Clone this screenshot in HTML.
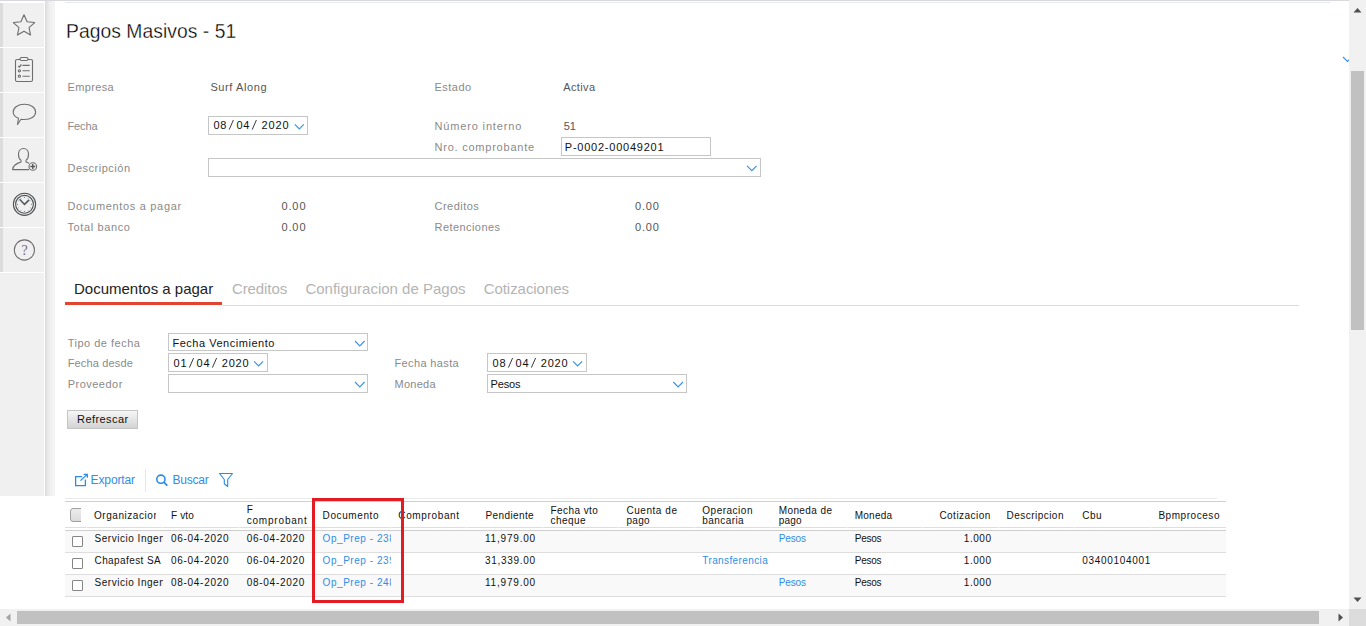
<!DOCTYPE html>
<html><head><meta charset="utf-8"><title>Pagos Masivos - 51</title>
<style>
html,body{margin:0;padding:0;width:1366px;height:626px;overflow:hidden;background:#fff;}
body{position:relative;font-family:"Liberation Sans",sans-serif;}
.a{position:absolute;}
.t{position:absolute;white-space:nowrap;font-family:"Liberation Sans",sans-serif;}
.box{position:absolute;box-sizing:border-box;border:1px solid #c6c6c6;background:#fff;}
.sep{position:absolute;left:0;width:44px;height:1px;background:#fff;}
.chev{position:absolute;width:11px;height:6px;}
.cb{position:absolute;box-sizing:border-box;width:11px;height:11px;border:1px solid #858585;border-radius:1px;background:#fff;}
</style></head>
<body>
<!-- top line -->
<div class="a" style="left:0;top:0;width:1366px;height:1px;background:#d8d9dd"></div>
<div class="a" style="left:65px;top:2px;width:1265px;height:1px;background:#e7e8e9"></div>

<!-- sidebar -->
<div class="a" style="left:0;top:1px;width:44px;height:495px;background:#f0f0f0"></div>
<div class="a" style="left:0;top:1px;width:44px;height:2px;background:#fff"></div>
<div class="a" style="left:0;top:3px;width:3px;height:269px;background:#dcdcdc"></div>
<div class="sep" style="top:47px"></div>
<div class="sep" style="top:92px"></div>
<div class="sep" style="top:137px"></div>
<div class="sep" style="top:182px"></div>
<div class="sep" style="top:227px"></div>
<div class="sep" style="top:272px"></div>
<div class="a" style="left:44px;top:1px;width:1px;height:494px;background:#fff"></div>
<div class="a" style="left:45px;top:1px;width:10px;height:495px;background:linear-gradient(to right,#d9d9d9 0%,#e6e6e6 20%,#eeeeee 45%,#f3f3f3 75%,#f4f4f4 100%)"></div>

<!-- sidebar icons -->
<svg class="a" style="left:0;top:0" width="45" height="280" viewBox="0 0 45 280" fill="none" stroke="#6e6e6e" stroke-width="1.1">
  <!-- star -->
  <path d="M24.00 14.80 L27.12 21.71 L34.65 22.54 L29.04 27.64 L30.58 35.06 L24.00 31.30 L17.42 35.06 L18.96 27.64 L13.35 22.54 L20.88 21.71 Z" stroke-linejoin="round"/>
  <!-- clipboard -->
  <rect x="15.5" y="59.5" width="17" height="22" rx="1.5"/>
  <rect x="20" y="57.5" width="8" height="3" rx="1.5" fill="#f0f0f0"/>
  <path d="M18.3 66 l1.1 1.1 l2-2.6" stroke-width="1.3"/>
  <path d="M22.5 65.4 h7.2 M22.5 70.8 h7.2 M22.5 76.2 h7.2"/>
  <circle cx="19.4" cy="70.8" r="1.1"/>
  <circle cx="19.4" cy="76.2" r="1.1"/>
  <!-- speech bubble -->
  <path d="M24.4 104.3 C30.8 104.3 35.6 107.5 35.6 112 C35.6 116.5 30.8 119.5 24.4 119.5 C23 119.5 22 119.4 21 119.2 L17.5 124.5 L18.5 118.3 C15 117 13.2 114.8 13.2 112 C13.2 107.5 18 104.3 24.4 104.3 Z" stroke-linejoin="round"/>
  <!-- user plus -->
  <path d="M23.5 148.5 C20.5 148.5 18.5 151 18.5 154.5 C18.5 157.5 19.8 159.5 21 160.3 L21 162 C16.5 163.5 13 165 12.6 169.6 L29 169.6 M26 160.3 C27.2 159.5 28.5 157.5 28.5 154.5 C28.5 151 26.5 148.5 23.5 148.5 M26 160.3 L26 162 C27 162.3 28 162.7 29 163.2" stroke-linejoin="round"/>
  <circle cx="32.8" cy="166.5" r="3.8" fill="#f0f0f0"/>
  <path d="M32.8 164.1 v4.8 M30.4 166.5 h4.8" stroke-width="1.4" stroke="#555"/>
  <!-- clock -->
  <g stroke="#4f5458">
  <circle cx="24.5" cy="204.3" r="11.1"/>
  <circle cx="24.5" cy="204.3" r="8.9"/>
  <path d="M19.6 199.3 L24.5 204.4 L29.1 199.9" stroke-width="1.5" stroke-linejoin="miter"/>
  </g>
  <g fill="#6a6e72" stroke="none"><circle cx="24.50" cy="197.30" r="0.55"/><circle cx="28.00" cy="198.24" r="0.42"/><circle cx="30.56" cy="200.80" r="0.42"/><circle cx="31.50" cy="204.30" r="0.55"/><circle cx="30.56" cy="207.80" r="0.42"/><circle cx="28.00" cy="210.36" r="0.42"/><circle cx="24.50" cy="211.30" r="0.55"/><circle cx="21.00" cy="210.36" r="0.42"/><circle cx="18.44" cy="207.80" r="0.42"/><circle cx="17.50" cy="204.30" r="0.55"/><circle cx="18.44" cy="200.80" r="0.42"/><circle cx="21.00" cy="198.24" r="0.42"/></g>
  <!-- help -->
  <circle cx="24.4" cy="250" r="10.1"/>
  <text x="24.5" y="255" font-family="Liberation Serif" font-size="14" fill="#6e6e6e" stroke="none" text-anchor="middle">?</text>
</svg>

<!-- form boxes -->
<div class="box" style="left:208px;top:116px;width:100px;height:19px"></div>
<div class="box" style="left:561px;top:137px;width:150px;height:19px"></div>
<div class="box" style="left:208px;top:158px;width:553px;height:19px"></div>

<!-- tabs -->
<div class="a" style="left:65px;top:302px;width:157px;height:3px;background:#e2452f"></div>
<div class="a" style="left:222px;top:305px;width:1077px;height:1px;background:#dcdcdc"></div>

<!-- filter boxes -->
<div class="box" style="left:168px;top:333px;width:200px;height:18px"></div>
<div class="box" style="left:168px;top:353px;width:100px;height:19px"></div>
<div class="box" style="left:168px;top:374px;width:200px;height:19px"></div>
<div class="box" style="left:487px;top:353px;width:100px;height:19px"></div>
<div class="box" style="left:487px;top:374px;width:200px;height:19px"></div>
<div class="a" style="left:67px;top:410px;width:71px;height:19px;box-sizing:border-box;border:1px solid #c4c4c4;background:linear-gradient(#f7f7f7,#d3d3d3)"></div>

<svg class="a" style="left:0;top:0" width="1366" height="626" viewBox="0 0 1366 626" fill="none" stroke="#222" stroke-width="0.9"><path d="M229.2 129.6 L233.4 120.0"/><path d="M252.2 129.6 L256.4 120.0"/><path d="M189.4 367.6 L193.6 358.0"/><path d="M212.4 367.6 L216.6 358.0"/><path d="M508.4 367.6 L512.6 358.0"/><path d="M531.4 367.6 L535.6 358.0"/></svg>
<!-- chevrons -->
<svg class="a" style="left:0;top:0" width="1366" height="626" viewBox="0 0 1366 626" fill="none" stroke="#3f92ea" stroke-width="1.2">
  <path d="M294.8 124.3 L299.3 128.8 L303.8 124.3"/>
  <path d="M747 165.8 L751.8 170.6 L756.6 165.8"/>
  <path d="M355 341 L359.8 345.8 L364.6 341"/>
  <path d="M254.1 361.3 L258.6 365.8 L263.1 361.3"/>
  <path d="M355 382 L359.8 386.8 L364.6 382"/>
  <path d="M573.1 361.3 L577.6 365.8 L582.1 361.3"/>
  <path d="M673.3 382.0 L678.1 386.8 L682.9 382.0"/>
  <path d="M1343 57 L1347.5 61.5 L1352 57"/>
</svg>

<!-- toolbar icons -->
<svg class="a" style="left:0;top:0" width="300" height="500" viewBox="0 0 300 500" fill="none" stroke="#2a8ce8" stroke-width="1.3">
  <path d="M82.2 476.6 H75.6 V485.6 H85.4 V479.4"/>
  <path d="M80.5 480.6 L87.1 474.4 M83.6 474.3 H87.3 V477.8"/>
  <circle cx="160.9" cy="479.2" r="4.1" stroke-width="1.6"/>
  <path d="M163.8 482.2 L167.3 485.7" stroke-width="1.8"/>
  <path d="M219.5 473.5 H232.5 L227.7 479.5 V486.5 L224.3 483.8 V479.5 Z" stroke-width="1.1" stroke-linejoin="round"/>
</svg>
<div class="a" style="left:145px;top:469px;width:1px;height:23px;background:#e6e6e6"></div>

<!-- table -->
<div class="a" style="left:65px;top:498px;width:1152px;height:1px;background:#ebebeb"></div>
<div class="a" style="left:65px;top:501px;width:1161px;height:1px;background:#cfcfcf"></div>
<div class="a" style="left:65px;top:527px;width:1161px;height:1px;background:#dedede"></div>
<div class="a" style="left:65px;top:530px;width:1161px;height:1px;background:#cfcfcf"></div>
<div class="a" style="left:65px;top:531px;width:1161px;height:21px;background:#f9f9f9"></div>
<div class="a" style="left:65px;top:552px;width:1161px;height:1px;background:#dedede"></div>
<div class="a" style="left:65px;top:574px;width:1161px;height:1px;background:#dedede"></div>
<div class="a" style="left:65px;top:575px;width:1161px;height:21px;background:#f9f9f9"></div>
<div class="a" style="left:65px;top:596px;width:1161px;height:1px;background:#dedede"></div>

<div class="a" style="left:86px;top:527px;width:1px;height:1px;background:#f4f4f4"></div><div class="a" style="left:162px;top:527px;width:1px;height:1px;background:#f4f4f4"></div><div class="a" style="left:238px;top:527px;width:1px;height:1px;background:#f4f4f4"></div><div class="a" style="left:314px;top:527px;width:1px;height:1px;background:#f4f4f4"></div><div class="a" style="left:390px;top:527px;width:1px;height:1px;background:#f4f4f4"></div><div class="a" style="left:466px;top:527px;width:1px;height:1px;background:#f4f4f4"></div><div class="a" style="left:542px;top:527px;width:1px;height:1px;background:#f4f4f4"></div><div class="a" style="left:618px;top:527px;width:1px;height:1px;background:#f4f4f4"></div><div class="a" style="left:694px;top:527px;width:1px;height:1px;background:#f4f4f4"></div><div class="a" style="left:770px;top:527px;width:1px;height:1px;background:#f4f4f4"></div><div class="a" style="left:846px;top:527px;width:1px;height:1px;background:#f4f4f4"></div><div class="a" style="left:922px;top:527px;width:1px;height:1px;background:#f4f4f4"></div><div class="a" style="left:998px;top:527px;width:1px;height:1px;background:#f4f4f4"></div><div class="a" style="left:1074px;top:527px;width:1px;height:1px;background:#f4f4f4"></div><div class="a" style="left:1150px;top:527px;width:1px;height:1px;background:#f4f4f4"></div>
<!-- header checkbox (clipped) -->
<div class="a" style="left:70px;top:508px;width:11px;height:14px;overflow:hidden">
  <div style="position:absolute;left:0;top:0;width:14px;height:14px;box-sizing:border-box;border:1px solid #a0a0a0;border-radius:3px;background:linear-gradient(#ececec,#dcdcdc)"></div>
</div>
<div class="cb" style="left:72px;top:536px"></div>
<div class="cb" style="left:72px;top:558px"></div>
<div class="cb" style="left:72px;top:580px"></div>

<div class="t" style="left:66.00px;top:21.00px;font-size:19.3px;line-height:21px;color:#000000;letter-spacing:0.053px;-webkit-text-stroke:0.3px #fff">Pagos Masivos - 51</div>
<div class="t" style="left:67.50px;top:81.00px;font-size:11px;line-height:12px;color:#8a8a8a;letter-spacing:0.350px;">Empresa</div>
<div class="t" style="left:210.40px;top:81.00px;font-size:11px;line-height:12px;color:#555555;letter-spacing:0.595px;">Surf Along</div>
<div class="t" style="left:434.50px;top:81.00px;font-size:11px;line-height:12px;color:#8a8a8a;letter-spacing:0.474px;">Estado</div>
<div class="t" style="left:563.20px;top:81.00px;font-size:11px;line-height:12px;color:#555555;letter-spacing:0.393px;">Activa</div>
<div class="t" style="left:67.50px;top:120.00px;font-size:11px;line-height:12px;color:#8a8a8a;letter-spacing:-0.114px;">Fecha</div>
<div class="t" style="left:213.40px;top:119.00px;font-size:11px;line-height:12px;color:#111111;letter-spacing:0.782px;">08</div>
<div class="t" style="left:236.40px;top:119.00px;font-size:11px;line-height:12px;color:#111111;letter-spacing:0.682px;">04</div>
<div class="t" style="left:261.50px;top:119.00px;font-size:11px;line-height:12px;color:#111111;letter-spacing:0.849px;">2020</div>
<div class="t" style="left:434.50px;top:120.00px;font-size:11px;line-height:12px;color:#8a8a8a;letter-spacing:0.847px;">Número interno</div>
<div class="t" style="left:563.70px;top:120.00px;font-size:11px;line-height:12px;color:#555555;letter-spacing:-0.118px;">51</div>
<div class="t" style="left:434.50px;top:141.00px;font-size:11px;line-height:12px;color:#8a8a8a;letter-spacing:0.772px;">Nro. comprobante</div>
<div class="t" style="left:564.80px;top:141.00px;font-size:11px;line-height:12px;color:#111111;letter-spacing:0.767px;">P-0002-00049201</div>
<div class="t" style="left:67.50px;top:162.00px;font-size:11px;line-height:12px;color:#8a8a8a;letter-spacing:0.505px;">Descripción</div>
<div class="t" style="left:67.50px;top:200.00px;font-size:11px;line-height:12px;color:#8a8a8a;letter-spacing:0.679px;">Documentos a pagar</div>
<div class="t" style="left:281.40px;top:200.00px;font-size:11px;line-height:12px;color:#555555;letter-spacing:0.903px;">0.00</div>
<div class="t" style="left:67.50px;top:221.00px;font-size:11px;line-height:12px;color:#8a8a8a;letter-spacing:0.616px;">Total banco</div>
<div class="t" style="left:281.40px;top:221.00px;font-size:11px;line-height:12px;color:#555555;letter-spacing:0.903px;">0.00</div>
<div class="t" style="left:434.50px;top:200.00px;font-size:11px;line-height:12px;color:#8a8a8a;letter-spacing:0.477px;">Creditos</div>
<div class="t" style="left:635.00px;top:200.00px;font-size:11px;line-height:12px;color:#555555;letter-spacing:0.803px;">0.00</div>
<div class="t" style="left:434.50px;top:221.00px;font-size:11px;line-height:12px;color:#8a8a8a;letter-spacing:0.435px;">Retenciones</div>
<div class="t" style="left:635.00px;top:221.00px;font-size:11px;line-height:12px;color:#555555;letter-spacing:0.803px;">0.00</div>
<div class="t" style="left:74.00px;top:280.00px;font-size:15px;line-height:17px;color:#222222;letter-spacing:-0.003px;">Documentos a pagar</div>
<div class="t" style="left:231.90px;top:280.00px;font-size:15px;line-height:17px;color:#b4b4b4;letter-spacing:-0.079px;">Creditos</div>
<div class="t" style="left:305.40px;top:280.00px;font-size:15px;line-height:17px;color:#b4b4b4;letter-spacing:-0.000px;">Configuracion de Pagos</div>
<div class="t" style="left:483.70px;top:280.00px;font-size:15px;line-height:17px;color:#b4b4b4;letter-spacing:-0.052px;">Cotizaciones</div>
<div class="t" style="left:67.70px;top:337.00px;font-size:11px;line-height:12px;color:#8a8a8a;letter-spacing:0.498px;">Tipo de fecha</div>
<div class="t" style="left:172.40px;top:337.00px;font-size:11px;line-height:12px;color:#111111;letter-spacing:0.529px;">Fecha Vencimiento</div>
<div class="t" style="left:67.70px;top:357.00px;font-size:11px;line-height:12px;color:#8a8a8a;letter-spacing:0.152px;">Fecha desde</div>
<div class="t" style="left:173.60px;top:357.00px;font-size:11px;line-height:12px;color:#111111;letter-spacing:0.782px;">01</div>
<div class="t" style="left:196.60px;top:357.00px;font-size:11px;line-height:12px;color:#111111;letter-spacing:0.682px;">04</div>
<div class="t" style="left:221.70px;top:357.00px;font-size:11px;line-height:12px;color:#111111;letter-spacing:0.849px;">2020</div>
<div class="t" style="left:67.70px;top:378.00px;font-size:11px;line-height:12px;color:#8a8a8a;letter-spacing:0.489px;">Proveedor</div>
<div class="t" style="left:394.50px;top:357.00px;font-size:11px;line-height:12px;color:#8a8a8a;letter-spacing:0.368px;">Fecha hasta</div>
<div class="t" style="left:492.60px;top:357.00px;font-size:11px;line-height:12px;color:#111111;letter-spacing:0.782px;">08</div>
<div class="t" style="left:515.60px;top:357.00px;font-size:11px;line-height:12px;color:#111111;letter-spacing:0.682px;">04</div>
<div class="t" style="left:540.70px;top:357.00px;font-size:11px;line-height:12px;color:#111111;letter-spacing:0.849px;">2020</div>
<div class="t" style="left:394.50px;top:378.00px;font-size:11px;line-height:12px;color:#8a8a8a;letter-spacing:0.273px;">Moneda</div>
<div class="t" style="left:490.50px;top:378.00px;font-size:11px;line-height:12px;color:#111111;letter-spacing:-0.143px;">Pesos</div>
<div class="t" style="left:77.00px;top:413.00px;font-size:11px;line-height:12px;color:#111111;letter-spacing:0.435px;">Refrescar</div>
<div class="t" style="left:90.60px;top:473.00px;font-size:12px;line-height:14px;color:#2f8ee8;letter-spacing:-0.122px;">Exportar</div>
<div class="t" style="left:172.40px;top:473.00px;font-size:12px;line-height:14px;color:#2f8ee8;letter-spacing:-0.190px;">Buscar</div>
<div class="a" style="left:86px;top:508.00px;width:70px;height:15px;overflow:hidden"><div class="t" style="left:8.00px;top:2px;font-size:10px;line-height:11px;color:#111111;letter-spacing:0.550px;">Organizacion</div></div>
<div class="t" style="left:170.90px;top:510.00px;font-size:10px;line-height:11px;color:#111111;letter-spacing:0.184px;">F vto</div>
<div class="t" style="left:246.70px;top:504.00px;font-size:10px;line-height:11px;color:#111111;letter-spacing:0.550px;">F</div>
<div class="a" style="left:238px;top:513.00px;width:69px;height:15px;overflow:hidden"><div class="t" style="left:8.70px;top:2px;font-size:10px;line-height:11px;color:#111111;letter-spacing:0.808px;">comprobante</div></div>
<div class="t" style="left:322.60px;top:510.00px;font-size:10px;line-height:11px;color:#111111;letter-spacing:0.603px;">Documento</div>
<div class="a" style="left:390px;top:508.00px;width:70px;height:15px;overflow:hidden"><div class="t" style="left:8.30px;top:2px;font-size:10px;line-height:11px;color:#111111;letter-spacing:0.639px;">Comprobante</div></div>
<div class="t" style="left:485.50px;top:510.00px;font-size:10px;line-height:11px;color:#111111;letter-spacing:0.390px;">Pendiente</div>
<div class="t" style="left:550.50px;top:505.00px;font-size:10px;line-height:11px;color:#111111;letter-spacing:0.431px;">Fecha vto</div>
<div class="t" style="left:550.50px;top:515.00px;font-size:10px;line-height:11px;color:#111111;letter-spacing:0.451px;">cheque</div>
<div class="t" style="left:626.40px;top:505.00px;font-size:10px;line-height:11px;color:#111111;letter-spacing:0.552px;">Cuenta de</div>
<div class="t" style="left:626.40px;top:515.00px;font-size:10px;line-height:11px;color:#111111;letter-spacing:0.338px;">pago</div>
<div class="t" style="left:702.30px;top:505.00px;font-size:10px;line-height:11px;color:#111111;letter-spacing:0.503px;">Operacion</div>
<div class="t" style="left:702.30px;top:515.00px;font-size:10px;line-height:11px;color:#111111;letter-spacing:0.429px;">bancaria</div>
<div class="t" style="left:778.70px;top:505.00px;font-size:10px;line-height:11px;color:#111111;letter-spacing:0.403px;">Moneda de</div>
<div class="t" style="left:778.70px;top:515.00px;font-size:10px;line-height:11px;color:#111111;letter-spacing:0.205px;">pago</div>
<div class="t" style="left:854.70px;top:510.00px;font-size:10px;line-height:11px;color:#111111;letter-spacing:0.245px;">Moneda</div>
<div class="t" style="left:939.40px;top:510.00px;font-size:10px;line-height:11px;color:#111111;letter-spacing:0.475px;">Cotizacion</div>
<div class="t" style="left:1006.60px;top:510.00px;font-size:10px;line-height:11px;color:#111111;letter-spacing:0.462px;">Descripcion</div>
<div class="t" style="left:1082.30px;top:510.00px;font-size:10px;line-height:11px;color:#111111;letter-spacing:0.458px;">Cbu</div>
<div class="a" style="left:1150px;top:508.00px;width:70px;height:15px;overflow:hidden"><div class="t" style="left:8.40px;top:2px;font-size:10px;line-height:11px;color:#111111;letter-spacing:0.550px;">Bpmproceso</div></div>
<div class="a" style="left:86px;top:531.00px;width:77px;height:15px;overflow:hidden"><div class="t" style="left:8.50px;top:2px;font-size:10px;line-height:11px;color:#111111;letter-spacing:0.530px;">Servicio Ingenieria</div></div>
<div class="t" style="left:170.90px;top:533.00px;font-size:10px;line-height:11px;color:#111111;letter-spacing:0.723px;">06-04-2020</div>
<div class="t" style="left:246.70px;top:533.00px;font-size:10px;line-height:11px;color:#111111;letter-spacing:0.723px;">06-04-2020</div>
<div class="a" style="left:314px;top:531.00px;width:77px;height:15px;overflow:hidden"><div class="t" style="left:8.60px;top:2px;font-size:10px;line-height:11px;color:#2f8ee8;letter-spacing:0.550px;">Op_Prep - 2385</div></div>
<div class="t" style="left:485.00px;top:533.00px;font-size:10px;line-height:11px;color:#111111;letter-spacing:0.802px;">11,979.00</div>
<div class="t" style="left:778.70px;top:533.00px;font-size:10px;line-height:11px;color:#2f8ee8;letter-spacing:-0.123px;">Pesos</div>
<div class="t" style="left:854.70px;top:533.00px;font-size:10px;line-height:11px;color:#111111;letter-spacing:-0.223px;">Pesos</div>
<div class="t" style="left:963.80px;top:533.00px;font-size:10px;line-height:11px;color:#111111;letter-spacing:0.534px;">1.000</div>
<div class="t" style="left:94.50px;top:555.00px;font-size:10px;line-height:11px;color:#111111;letter-spacing:0.406px;">Chapafest SA</div>
<div class="t" style="left:170.90px;top:555.00px;font-size:10px;line-height:11px;color:#111111;letter-spacing:0.723px;">06-04-2020</div>
<div class="t" style="left:246.70px;top:555.00px;font-size:10px;line-height:11px;color:#111111;letter-spacing:0.723px;">06-04-2020</div>
<div class="a" style="left:314px;top:553.00px;width:77px;height:15px;overflow:hidden"><div class="t" style="left:8.60px;top:2px;font-size:10px;line-height:11px;color:#2f8ee8;letter-spacing:0.550px;">Op_Prep - 2391</div></div>
<div class="t" style="left:485.00px;top:555.00px;font-size:10px;line-height:11px;color:#111111;letter-spacing:0.709px;">31,339.00</div>
<div class="t" style="left:702.30px;top:555.00px;font-size:10px;line-height:11px;color:#2f8ee8;letter-spacing:0.391px;">Transferencia</div>
<div class="t" style="left:1082.30px;top:555.00px;font-size:10px;line-height:11px;color:#111111;letter-spacing:0.678px;">03400104001</div>
<div class="t" style="left:854.70px;top:555.00px;font-size:10px;line-height:11px;color:#111111;letter-spacing:-0.223px;">Pesos</div>
<div class="t" style="left:963.80px;top:555.00px;font-size:10px;line-height:11px;color:#111111;letter-spacing:0.534px;">1.000</div>
<div class="a" style="left:86px;top:575.00px;width:77px;height:15px;overflow:hidden"><div class="t" style="left:8.50px;top:2px;font-size:10px;line-height:11px;color:#111111;letter-spacing:0.530px;">Servicio Ingenieria</div></div>
<div class="t" style="left:170.90px;top:577.00px;font-size:10px;line-height:11px;color:#111111;letter-spacing:0.723px;">08-04-2020</div>
<div class="t" style="left:246.70px;top:577.00px;font-size:10px;line-height:11px;color:#111111;letter-spacing:0.723px;">08-04-2020</div>
<div class="a" style="left:314px;top:575.00px;width:77px;height:15px;overflow:hidden"><div class="t" style="left:8.60px;top:2px;font-size:10px;line-height:11px;color:#2f8ee8;letter-spacing:0.550px;">Op_Prep - 2482</div></div>
<div class="t" style="left:485.00px;top:577.00px;font-size:10px;line-height:11px;color:#111111;letter-spacing:0.802px;">11,979.00</div>
<div class="t" style="left:778.70px;top:577.00px;font-size:10px;line-height:11px;color:#2f8ee8;letter-spacing:-0.123px;">Pesos</div>
<div class="t" style="left:854.70px;top:577.00px;font-size:10px;line-height:11px;color:#111111;letter-spacing:-0.223px;">Pesos</div>
<div class="t" style="left:963.80px;top:577.00px;font-size:10px;line-height:11px;color:#111111;letter-spacing:0.534px;">1.000</div>

<!-- red highlight -->
<div class="a" style="left:312px;top:498px;width:92px;height:105px;box-sizing:border-box;border:3px solid #e31b23"></div>

<!-- scrollbars -->
<div class="a" style="left:1349px;top:0;width:17px;height:609px;background:#f1f1f1"></div>
<div class="a" style="left:1351px;top:71px;width:13px;height:259px;background:#c1c1c1"></div>
<div class="a" style="left:0;top:609px;width:1349px;height:17px;background:#f1f1f1"></div>
<div class="a" style="left:17px;top:611px;width:1302px;height:13px;background:#c1c1c1"></div>
<div class="a" style="left:1349px;top:609px;width:17px;height:17px;background:#dcdcdc"></div>
<svg class="a" style="left:0;top:0" width="1366" height="626" viewBox="0 0 1366 626">
  <path d="M1353.5 12.5 L1357.5 8 L1361.5 12.5 Z" fill="#505050"/>
  <path d="M1353.5 597.5 L1357.5 602 L1361.5 597.5 Z" fill="#505050"/>
  <path d="M10.5 613.5 L6 617.5 L10.5 621.5 Z" fill="#a3a3a3"/>
  <path d="M1338.5 613.5 L1343 617.5 L1338.5 621.5 Z" fill="#505050"/>
</svg>

</body></html>
